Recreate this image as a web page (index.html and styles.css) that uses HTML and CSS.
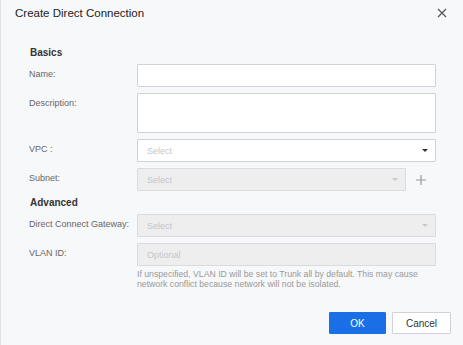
FILE: index.html
```html
<!DOCTYPE html>
<html>
<head>
<meta charset="utf-8">
<link rel="stylesheet" href="styles.css">
</head>
<body>
<div class="dialog">
  <div class="header">
    <span class="title">Create Direct Connection</span>
    <svg class="close" width="10" height="10" viewBox="0 0 10 10"><path d="M1 1L9 9M9 1L1 9" stroke="#555" stroke-width="1.2" fill="none"/></svg>
  </div>
  <div class="body">
    <div class="section">Basics</div>
    <div class="row">
      <div class="label">Name:</div>
      <div class="control"><div class="input"></div></div>
    </div>
    <div class="row">
      <div class="label">Description:</div>
      <div class="control"><div class="input textarea"></div></div>
    </div>
    <div class="row">
      <div class="label">VPC :</div>
      <div class="control"><div class="input select"><span class="ph">Select</span><span class="caret"></span></div></div>
    </div>
    <div class="row">
      <div class="label">Subnet:</div>
      <div class="control with-add">
        <div class="input select disabled short"><span class="ph">Select</span><span class="caret light"></span></div>
        <svg class="plus" width="10" height="10" viewBox="0 0 10 10"><path d="M5 0V10M0 5H10" stroke="#999" stroke-width="1.2"/></svg>
      </div>
    </div>
    <div class="section adv">Advanced</div>
    <div class="row">
      <div class="label">Direct Connect Gateway:</div>
      <div class="control"><div class="input select disabled"><span class="ph">Select</span><span class="caret light"></span></div></div>
    </div>
    <div class="row">
      <div class="label">VLAN ID:</div>
      <div class="control">
        <div class="input disabled"><span class="ph">Optional</span></div>
        <div class="help">If unspecified, VLAN ID will be set to Trunk all by default. This may cause network conflict because network will not be isolated.</div>
      </div>
    </div>
  </div>
  <div class="footer">
    <button class="btn primary">OK</button>
    <button class="btn">Cancel</button>
  </div>
</div>
</body>
</html>
```
FILE: styles.css
```css
html, body {
  margin: 0;
  padding: 0;
}
body {
  width: 463px;
  height: 345px;
  overflow: hidden;
  font-family: "Liberation Sans", Arial, sans-serif;
  background: #f7f8fa;
}
.dialog {
  width: 463px;
  height: 345px;
  box-sizing: border-box;
  border-left: 1px solid #e2e4e8;
  background: #f7f8fa;
  display: flex;
  flex-direction: column;
}
.header {
  height: 25px;
  display: flex;
  align-items: center;
  justify-content: space-between;
  padding: 0 16px 0 14px;
}
.title {
  font-size: 11.5px;
  color: #222;
}
.close {
  display: block;
}
.body {
  padding: 0 27px 0 28px;
  flex: 1;
}
.section {
  font-size: 10px;
  font-weight: bold;
  color: #333;
  padding: 22px 0 0 1px;
  height: 17px;
}
.section.adv {
  padding-top: 0;
  height: 17px;
}
.row {
  display: flex;
  margin-bottom: 6px;
}
.label {
  width: 108px;
  flex: none;
  font-size: 9px;
  color: #666;
  padding-top: 5px;
}
.control {
  flex: 1;
}
.with-add {
  display: flex;
  align-items: center;
}
.input {
  height: 23px;
  box-sizing: border-box;
  border: 1px solid #cfd2d8;
  background: #fff;
  border-radius: 1px;
  display: flex;
  align-items: center;
  padding: 0 9px;
  position: relative;
}
.textarea {
  height: 40px;
}
.input.disabled {
  background: #eeeeef;
  border-color: #d9dbde;
}
.short {
  width: 269px;
}
.ph {
  font-size: 9px;
  color: #c4c6ca;
}
.input.select {
  justify-content: space-between;
  padding-right: 7px;
}
.caret {
  width: 0;
  height: 0;
  border-left: 3px solid transparent;
  border-right: 3px solid transparent;
  border-top: 3px solid #333;
}
.caret.light {
  border-top-color: #c8c9cc;
}
.plus {
  margin-left: 10px;
}
.help {
  font-size: 8.7px;
  line-height: 10px;
  color: #999;
  margin-top: 3px;
}
.footer {
  display: flex;
  justify-content: flex-end;
  gap: 6px;
  padding: 0 12px 11px 0;
}
.btn {
  height: 22px;
  box-sizing: border-box;
  font-family: "Liberation Sans", Arial, sans-serif;
  font-size: 10px;
  border: 1px solid #cfd2d8;
  background: #fff;
  color: #333;
  border-radius: 1px;
  width: 59px;
  padding: 0;
}
.btn.primary {
  background: #1a6fe6;
  border-color: #1a6fe6;
  color: #fff;
  width: 57px;
}
```
